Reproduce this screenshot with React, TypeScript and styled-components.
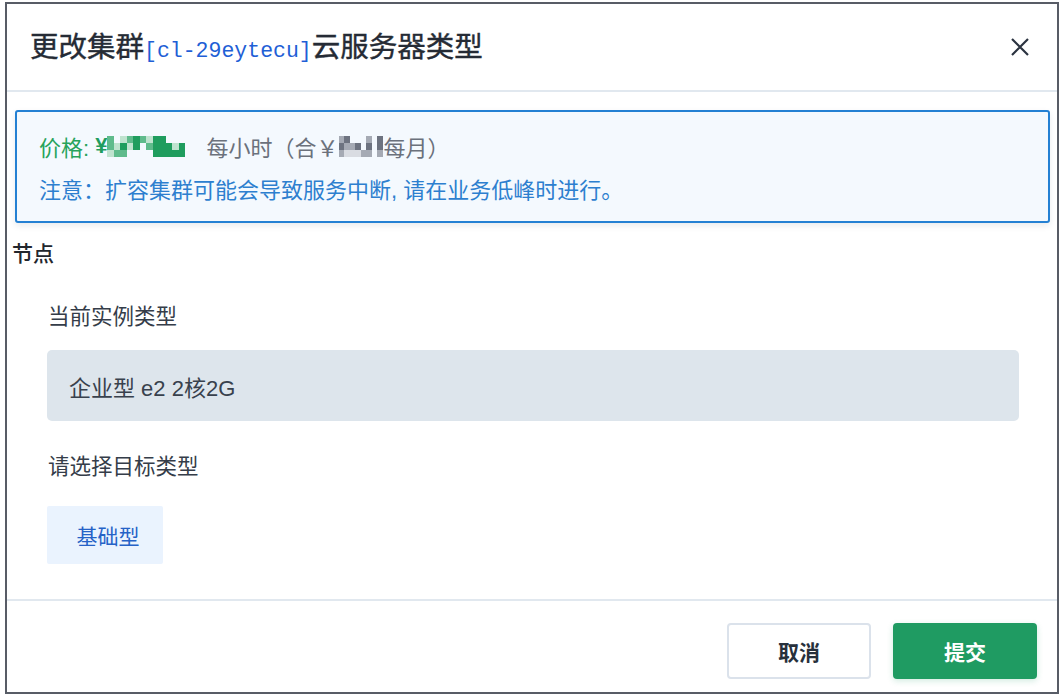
import React from 'react';
import styled, { createGlobalStyle } from 'styled-components';

const GlobalStyle = createGlobalStyle`
  html, body {
    margin: 0;
    padding: 0;
    background: #ffffff;
  }
  body {
    font-family: "Liberation Sans", "Noto Sans CJK SC", sans-serif;
    color: #2a313c;
  }
`;

const Frame = styled.div`
  box-sizing: border-box;
  width: 1054px;
  height: 692px;
  margin: 2px 0 0 5px;
  border: 2px solid #585c66;
  background: #ffffff;
  display: flex;
  flex-direction: column;
`;

const Header = styled.div`
  height: 80px;
  border-bottom: 2px solid #e1e8ef;
  display: flex;
  align-items: center;
  justify-content: space-between;
  padding: 0 27px 6px 23px;
`;

const Title = styled.h1`
  margin: 0;
  font-size: 28.5px;
  font-weight: 400;
  color: #252b35;
  font-family: "Noto Sans CJK SC", sans-serif;
  display: flex;
  align-items: baseline;
  -webkit-text-stroke: 0.4px #252b35;
`;

const Code = styled.span`
  font-family: "Liberation Mono", "DejaVu Sans Mono", monospace;
  font-size: 21.5px;
  font-weight: 400;
  color: #1f5fd6;
  -webkit-text-stroke: 0;
`;

const CloseButton = styled.button`
  border: 0;
  background: none;
  padding: 0;
  width: 20px;
  height: 20px;
  display: flex;
  cursor: pointer;
  margin-top: 6px;
`;

const Body = styled.div`
  flex: 1;
  padding: 18px 7px 0 5px;
  display: flex;
  flex-direction: column;
`;

const Alert = styled.div`
  margin-left: 3px;
  border: 2px solid #2480d3;
  border-radius: 3px;
  background: #f4f9fe;
  box-shadow: 0 3px 6px rgba(40, 60, 90, 0.1);
  padding: 13px 22px 12px;
  font-size: 22px;
`;

const AlertLine = styled.div<{ $tone?: 'price' | 'note' }>`
  display: flex;
  align-items: center;
  height: 42px;
  color: ${(p) => (p.$tone === 'note' ? '#2d7fcf' : '#6b717c')};
  white-space: nowrap;
`;

const PriceLabel = styled.span`
  color: #27a35b;
`;

const Yen = styled.span<{ $color: string; $bold?: boolean }>`
  color: ${(p) => p.$color};
  font-weight: ${(p) => (p.$bold ? 700 : 400)};
`;

const Unit = styled.span<{ $gap?: number }>`
  margin-left: ${(p) => p.$gap ?? 0}px;
`;

const Mosaic = styled.span<{ $cols: number; $cell: number; $rows: number }>`
  display: inline-grid;
  grid-template-columns: repeat(${(p) => p.$cols}, ${(p) => p.$cell}px);
  grid-auto-rows: ${(p) => Math.round(21 / p.$rows)}px;
`;

const Cell = styled.span<{ $c: string }>`
  background: ${(p) => p.$c};
`;

const SectionTitle = styled.div`
  margin-top: 16px;
  line-height: 30px;
  font-size: 21px;
  font-weight: 500;
  color: #22262d;
`;

const Field = styled.div`
  padding-left: 35px;
  padding-right: 31px;
  display: flex;
  flex-direction: column;
  align-items: flex-start;
`;

const Label = styled.div<{ $top: number }>`
  margin-top: ${(p) => p.$top}px;
  padding-left: 1px;
  line-height: 30px;
  font-size: 21.5px;
  color: #353d49;
`;

const CurrentType = styled.div`
  margin-top: 18px;
  align-self: stretch;
  height: 71px;
  border-radius: 5px;
  background: #dde5ec;
  display: flex;
  align-items: center;
  padding-left: 22px;
  font-size: 22px;
  color: #38414d;
`;

const TypeOption = styled.button<{ $active?: boolean }>`
  margin-top: 24px;
  width: 116px;
  height: 58px;
  border: 0;
  border-radius: 2px;
  padding: 0 0 0 6px;
  background: ${(p) => (p.$active ? '#eaf3fe' : '#ffffff')};
  color: #2562c7;
  font-size: 21px;
  font-family: "Liberation Sans", "Noto Sans CJK SC", sans-serif;
  cursor: pointer;
`;

const Footer = styled.div`
  border-top: 2px solid #e1e8ef;
  padding: 22px 20px 13px;
  display: flex;
  justify-content: flex-end;
  gap: 22px;
`;

const Button = styled.button<{ $primary?: boolean }>`
  width: 144px;
  height: 56px;
  border-radius: 4px;
  font-size: 21px;
  font-weight: 700;
  font-family: "Liberation Sans", "Noto Sans CJK SC", sans-serif;
  cursor: pointer;
  border: ${(p) => (p.$primary ? '0' : '2px solid #dbe2eb')};
  background: ${(p) => (p.$primary ? '#1f9b62' : '#ffffff')};
  color: ${(p) => (p.$primary ? '#ffffff' : '#27303c')};
  box-shadow: ${(p) => (p.$primary ? '0 2px 6px rgba(31,155,98,0.2)' : 'none')};
`;

const D = '#1f9d5e';
const M = '#5fbb8c';
const L = '#bfe3cf';
const T = 'transparent';
const greenCells = [
  M, T, L, M, D, M, L, D, D, T, T, T,
  M, L, D, L, D, T, M, D, D, D, L, D,
  L, M, M, T, T, T, T, D, D, D, D, D,
];

const g1 = '#6d7380';
const g2 = '#a5aab4';
const g3 = '#d9dce2';
const W = '#f4f9fe';
const grayCells = [
  g2, g1, W, W, W, g2, W, g1,
  g1, g2, g2, g1, W, g1, W, g1,
  g2, g3, g3, g3, g2, g2, W, g2,
];

const CloseIcon = () => (
  <svg width="20" height="20" viewBox="0 0 20 20">
    <path d="M2 2 L18 18 M18 2 L2 18" stroke="#2b3340" strokeWidth="2.2" strokeLinecap="butt" />
  </svg>
);

export default function App() {
  return (
    <>
      <GlobalStyle />
      <Frame>
        <Header>
          <Title>
            更改集群<Code>[cl-29eytecu]</Code>云服务器类型
          </Title>
          <CloseButton aria-label="关闭">
            <CloseIcon />
          </CloseButton>
        </Header>
        <Body>
          <Alert>
            <AlertLine>
              <PriceLabel>价格:&nbsp;</PriceLabel>
              <Yen $color="#1f9d5e" $bold>¥</Yen>
              <Mosaic $cols={12} $cell={6.5} $rows={3}>
                {greenCells.map((c, i) => (
                  <Cell key={i} $c={c} />
                ))}
              </Mosaic>
              <Unit $gap={21}>每小时（合￥</Unit>
              <Mosaic $cols={8} $cell={5.5} $rows={3}>
                {grayCells.map((c, i) => (
                  <Cell key={i} $c={c} />
                ))}
              </Mosaic>
              <Unit $gap={1}>每月）</Unit>
            </AlertLine>
            <AlertLine $tone="note">注意：扩容集群可能会导致服务中断, 请在业务低峰时进行。</AlertLine>
          </Alert>
          <SectionTitle>节点</SectionTitle>
          <Field>
            <Label $top={33}>当前实例类型</Label>
            <CurrentType>企业型 e2 2核2G</CurrentType>
            <Label $top={31}>请选择目标类型</Label>
            <TypeOption $active>基础型</TypeOption>
          </Field>
        </Body>
        <Footer>
          <Button>取消</Button>
          <Button $primary>提交</Button>
        </Footer>
      </Frame>
    </>
  );
}
